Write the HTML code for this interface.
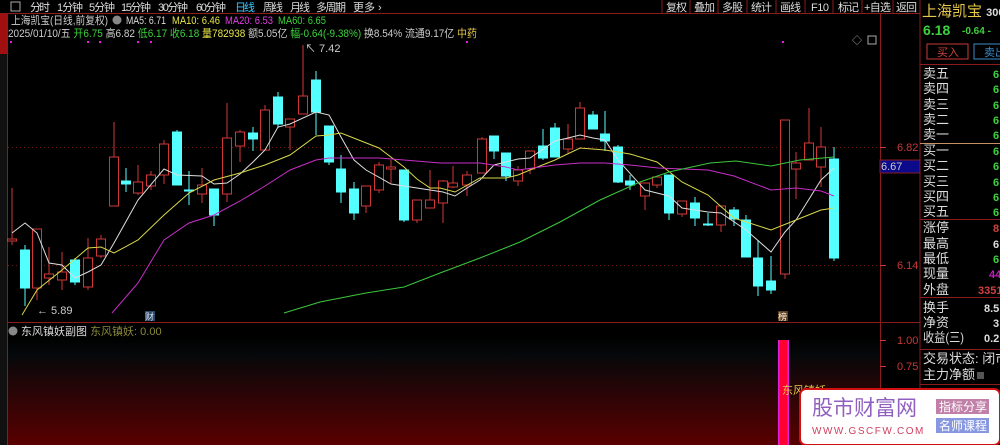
<!DOCTYPE html>
<html><head><meta charset="utf-8"><style>
body{margin:0;background:#000;width:1000px;height:445px;overflow:hidden;font-family:"Liberation Sans","Noto Sans CJK SC",sans-serif}
svg{position:absolute;left:0;top:0}
text{font-family:"Liberation Sans","Noto Sans CJK SC",sans-serif}
</style></head><body>
<svg width="1000" height="445" viewBox="0 0 1000 445">
<defs>
<linearGradient id="g" x1="0" y1="0" x2="0" y2="1"><stop offset="0" stop-color="#000"/><stop offset="0.15" stop-color="#05080a"/><stop offset="1" stop-color="#5a0000"/></linearGradient>
</defs>
<rect x="8" y="338" width="872" height="107" fill="url(#g)"/>
<!-- top bar -->
<line x1="0" y1="13.5" x2="920" y2="13.5" stroke="#8a1c1c"/>
<rect x="11" y="2" width="9" height="9" fill="none" stroke="#aaa"/>
<g font-size="11" fill="#ddd">
<text x="30" y="11" textLength="20">分时</text><text x="57" y="11" textLength="26">1分钟</text><text x="89" y="11" textLength="26">5分钟</text><text x="121" y="11" textLength="30">15分钟</text><text x="158" y="11" textLength="30">30分钟</text><text x="196" y="11" textLength="30">60分钟</text><text x="235" y="11" fill="#3cc8ff" textLength="20">日线</text><text x="263" y="11" textLength="20">周线</text><text x="290" y="11" textLength="20">月线</text><text x="316" y="11" textLength="30">多周期</text><text x="353" y="11">更多 ›</text>
<text x="666" y="11" textLength="21">复权</text><text x="694" y="11" textLength="21">叠加</text><text x="722" y="11" textLength="21">多股</text><text x="751" y="11" textLength="21">统计</text><text x="780" y="11" textLength="21">画线</text><text x="811" y="11" textLength="18">F10</text><text x="838" y="11" textLength="21">标记</text><text x="864" y="11" textLength="27">+自选</text><text x="896" y="11" textLength="21">返回</text>
</g>
<g stroke="#8a1c1c"><line x1="662" y1="0" x2="662" y2="13"/><line x1="690" y1="0" x2="690" y2="13"/><line x1="718" y1="0" x2="718" y2="13"/><line x1="747" y1="0" x2="747" y2="13"/><line x1="776" y1="0" x2="776" y2="13"/><line x1="805" y1="0" x2="805" y2="13"/><line x1="833" y1="0" x2="833" y2="13"/><line x1="862" y1="0" x2="862" y2="13"/><line x1="893" y1="0" x2="893" y2="13"/><line x1="920" y1="0" x2="920" y2="445"/></g>
<!-- left strip -->
<rect x="0" y="14" width="7" height="431" fill="#111"/>
<rect x="0" y="14" width="7" height="40" fill="#a01010"/>
<line x1="7.5" y1="14" x2="7.5" y2="445" stroke="#8a1c1c"/>
<!-- chart frame -->
<line x1="880.5" y1="14" x2="880.5" y2="445" stroke="#8a1c1c"/>
<line x1="8" y1="322.5" x2="920" y2="322.5" stroke="#8a1c1c"/>
<line x1="8" y1="147.5" x2="880" y2="147.5" stroke="#6a1a1a" stroke-dasharray="1,3"/>
<line x1="8" y1="265.5" x2="880" y2="265.5" stroke="#6a1a1a" stroke-dasharray="1,3"/>
<g font-size="11"><text x="11" y="24" fill="#ccc" textLength="97" lengthAdjust="spacingAndGlyphs">上海凯宝(日线,前复权)</text>
<circle cx="117" cy="20" r="4.5" fill="#888"/>
<text x="126" y="24" fill="#ddd" textLength="40" lengthAdjust="spacingAndGlyphs">MA5: 6.71</text><text x="172" y="24" fill="#e6e64a" textLength="48" lengthAdjust="spacingAndGlyphs">MA10: 6.46</text><text x="225" y="24" fill="#e23ce2" textLength="48" lengthAdjust="spacingAndGlyphs">MA20: 6.53</text><text x="278" y="24" fill="#3cd23c" textLength="48" lengthAdjust="spacingAndGlyphs">MA60: 6.65</text>
<text x="8" y="37" fill="#ccc" textLength="469" lengthAdjust="spacingAndGlyphs">2025/01/10/五 <tspan fill="#3cd23c">开6.75</tspan> 高6.82 <tspan fill="#3cd23c">低6.17 收6.18</tspan> <tspan fill="#e6e64a">量782938</tspan> 额5.05亿 <tspan fill="#3cd23c">幅-0.64(-9.38%)</tspan> 换8.54% 流通9.17亿 <tspan fill="#e6c84a">中药</tspan></text></g>
<g fill="#e020e0"><rect x="10" y="41" width="2" height="2"/><rect x="87" y="41" width="2" height="2"/><rect x="99" y="41" width="2" height="2"/><rect x="137" y="41" width="2" height="2"/><rect x="150" y="41" width="2" height="2"/><rect x="466" y="41" width="2" height="2"/><rect x="782" y="41" width="2" height="2"/></g>
<text x="852" y="44" font-size="10" fill="#aaa">◇</text><rect x="868" y="36" width="8" height="8" fill="none" stroke="#aaa"/>
<!-- candles -->
<g stroke="#d03838" stroke-width="1" fill="#000">
<line x1="12" y1="188" x2="12" y2="245"/><rect x="7.5" y="239" width="9" height="2"/>
<line x1="37" y1="229" x2="37" y2="300"/><rect x="32.5" y="229" width="9" height="59"/>
<line x1="49" y1="247" x2="49" y2="285"/><rect x="44.5" y="274" width="9" height="4"/>
<line x1="62" y1="252" x2="62" y2="290"/><rect x="57.5" y="272" width="9" height="8"/>
<line x1="88" y1="238" x2="88" y2="290"/><rect x="83.5" y="258" width="9" height="29"/>
<line x1="101" y1="235" x2="101" y2="258"/><rect x="96.5" y="239" width="9" height="17"/>
<line x1="114" y1="122" x2="114" y2="206"/><rect x="109.5" y="157" width="9" height="49"/>
<line x1="138" y1="165" x2="138" y2="195"/><rect x="133.5" y="182" width="9" height="11"/>
<line x1="151" y1="171" x2="151" y2="190"/><rect x="146.5" y="175" width="9" height="11"/>
<line x1="164" y1="140" x2="164" y2="184"/><rect x="159.5" y="144" width="9" height="31"/>
<line x1="202" y1="168" x2="202" y2="203"/><rect x="197.5" y="185" width="9" height="9"/>
<line x1="227" y1="103" x2="227" y2="202"/><rect x="222.5" y="138" width="9" height="56"/>
<line x1="240" y1="130" x2="240" y2="162"/><rect x="235.5" y="132" width="9" height="14"/>
<line x1="265" y1="105" x2="265" y2="150"/><rect x="260.5" y="110" width="9" height="40"/>
<line x1="290" y1="119" x2="290" y2="150"/><rect x="285.5" y="119" width="9" height="8"/>
<line x1="303" y1="45" x2="303" y2="114"/><rect x="298.5" y="96" width="9" height="18"/>
<line x1="366" y1="186" x2="366" y2="213"/><rect x="361.5" y="186" width="9" height="20"/>
<line x1="379" y1="162" x2="379" y2="193"/><rect x="374.5" y="165" width="9" height="25"/>
<line x1="391" y1="160" x2="391" y2="183"/><rect x="386.5" y="167" width="9" height="2"/>
<line x1="417" y1="200" x2="417" y2="223"/><rect x="412.5" y="200" width="9" height="20"/>
<line x1="430" y1="170" x2="430" y2="208"/><rect x="425.5" y="200" width="9" height="8"/>
<line x1="443" y1="180" x2="443" y2="223"/><rect x="438.5" y="181" width="9" height="22"/>
<line x1="453" y1="166" x2="453" y2="188"/><rect x="448.5" y="183" width="9" height="4"/>
<line x1="467" y1="171" x2="467" y2="196"/><rect x="462.5" y="175" width="9" height="10"/>
<line x1="482" y1="137" x2="482" y2="173"/><rect x="477.5" y="139" width="9" height="34"/>
<line x1="518" y1="166" x2="518" y2="186"/><rect x="513.5" y="170" width="9" height="11"/>
<line x1="530" y1="151" x2="530" y2="174"/><rect x="525.5" y="151" width="9" height="18"/>
<line x1="568" y1="124" x2="568" y2="154"/><rect x="563.5" y="139" width="9" height="10"/>
<line x1="580" y1="102" x2="580" y2="139"/><rect x="575.5" y="108" width="9" height="31"/>
<line x1="645" y1="183" x2="645" y2="210"/><rect x="640.5" y="183" width="9" height="13"/>
<line x1="657" y1="177" x2="657" y2="188"/><rect x="652.5" y="177" width="9" height="8"/>
<line x1="682" y1="201" x2="682" y2="217"/><rect x="677.5" y="201" width="9" height="13"/>
<line x1="721" y1="206" x2="721" y2="232"/><rect x="716.5" y="206" width="9" height="19"/>
<line x1="785" y1="120" x2="785" y2="279"/><rect x="780.5" y="120" width="9" height="154"/>
<line x1="796" y1="152" x2="796" y2="199"/><rect x="791.5" y="163" width="9" height="6"/>
<line x1="809" y1="108" x2="809" y2="160"/><rect x="804.5" y="143" width="9" height="17"/>
<line x1="821" y1="127" x2="821" y2="187"/><rect x="816.5" y="147" width="9" height="20"/>
</g>
<g stroke="#54ffff" fill="#54ffff">
<line x1="25" y1="245" x2="25" y2="306"/><rect x="20.5" y="250" width="9" height="38"/>
<line x1="75" y1="258" x2="75" y2="285"/><rect x="70.5" y="260" width="9" height="22"/>
<line x1="126" y1="168" x2="126" y2="192"/><rect x="121.5" y="181" width="9" height="3"/>
<line x1="177" y1="130" x2="177" y2="185"/><rect x="172.5" y="132" width="9" height="53"/>
<line x1="189" y1="171" x2="189" y2="205"/><rect x="184.5" y="190" width="9" height="1"/>
<line x1="214" y1="189" x2="214" y2="226"/><rect x="209.5" y="189" width="9" height="26"/>
<line x1="253" y1="127" x2="253" y2="151"/><rect x="248.5" y="133" width="9" height="6"/>
<line x1="278" y1="92" x2="278" y2="128"/><rect x="273.5" y="97" width="9" height="27"/>
<line x1="316" y1="71" x2="316" y2="135"/><rect x="311.5" y="80" width="9" height="32"/>
<line x1="329" y1="126" x2="329" y2="165"/><rect x="324.5" y="126" width="9" height="36"/>
<line x1="341" y1="155" x2="341" y2="203"/><rect x="336.5" y="169" width="9" height="23"/>
<line x1="354" y1="182" x2="354" y2="220"/><rect x="349.5" y="189" width="9" height="24"/>
<line x1="404" y1="170" x2="404" y2="222"/><rect x="399.5" y="170" width="9" height="50"/>
<line x1="494" y1="136" x2="494" y2="159"/><rect x="489.5" y="136" width="9" height="15"/>
<line x1="506" y1="153" x2="506" y2="181"/><rect x="501.5" y="153" width="9" height="23"/>
<line x1="543" y1="129" x2="543" y2="160"/><rect x="538.5" y="146" width="9" height="12"/>
<line x1="555" y1="123" x2="555" y2="157"/><rect x="550.5" y="128" width="9" height="29"/>
<line x1="593" y1="111" x2="593" y2="129"/><rect x="588.5" y="115" width="9" height="14"/>
<line x1="605" y1="111" x2="605" y2="151"/><rect x="600.5" y="134" width="9" height="7"/>
<line x1="618" y1="145" x2="618" y2="183"/><rect x="613.5" y="147" width="9" height="35"/>
<line x1="630" y1="175" x2="630" y2="190"/><rect x="625.5" y="181" width="9" height="4"/>
<line x1="669" y1="175" x2="669" y2="220"/><rect x="664.5" y="175" width="9" height="38"/>
<line x1="695" y1="197" x2="695" y2="226"/><rect x="690.5" y="203" width="9" height="15"/>
<line x1="708" y1="213" x2="708" y2="226"/><rect x="703.5" y="224" width="9" height="1"/>
<line x1="734" y1="207" x2="734" y2="226"/><rect x="729.5" y="210" width="9" height="9"/>
<line x1="746" y1="215" x2="746" y2="257"/><rect x="741.5" y="220" width="9" height="37"/>
<line x1="758" y1="240" x2="758" y2="296"/><rect x="753.5" y="258" width="9" height="28"/>
<line x1="771" y1="256" x2="771" y2="294"/><rect x="766.5" y="281" width="9" height="9"/>
<line x1="834" y1="147" x2="834" y2="261"/><rect x="829.5" y="159" width="9" height="99"/>
</g>
<!-- MAs -->
<g fill="none" stroke-width="1">
<polyline stroke="#dddddd" points="12,233 25,223 37,233 49,263 62,265 75,278 88,272 101,265 114,243 138,200 164,169 177,175 202,176 214,184 227,183 240,174 253,162 265,150 278,127 290,124 316,112 329,115 341,137 354,160 366,170 391,184 430,190 443,192 455,196 467,188 480,180 494,165 506,162 518,159 530,158 555,141 568,138 580,135 593,138 605,140 618,160 645,190 669,196 682,208 708,212 721,213 746,230 771,252 785,232 796,220 821,180 834,168"/>
<polyline stroke="#d8d84a" points="22,315 37,290 62,270 88,248 101,247 114,253 138,240 164,215 189,193 214,180 240,173 265,165 290,155 316,136 329,135 341,133 379,148 404,167 417,179 430,188 440,188 455,192 480,178 506,178 518,175 530,170 555,160 580,148 605,150 630,154 657,162 682,182 708,195 734,218 771,230 796,220 821,210 834,208"/>
<polyline stroke="#c82ec8" points="112,313 138,283 164,240 189,223 214,215 240,201 265,186 290,170 316,160 329,158 354,158 379,158 404,160 440,163 480,163 506,167 518,170 555,165 580,163 605,163 630,165 658,168 708,170 734,176 771,190 796,188 821,191 834,196"/>
<polyline stroke="#3cc83c" points="284,313 320,302 366,293 404,287 440,273 480,258 520,242 560,222 600,200 640,182 669,172 710,163 736,161 771,166 800,160 834,157"/>
</g>
<text x="305" y="52" font-size="11" fill="#ccc">↖ 7.42</text>
<text x="37" y="314" font-size="11" fill="#ccc">← 5.89</text>
<rect x="145" y="311" width="10" height="10" fill="#2a4a6a"/><text x="145" y="320" font-size="9" fill="#dde">财</text>
<rect x="778" y="311" width="10" height="10" fill="#5a4020"/><text x="778" y="320" font-size="9" fill="#fed">榜</text>
<!-- right axis -->
<g font-size="11" fill="#c83838"><text x="897" y="151">6.82</text><text x="897" y="269">6.14</text><text x="897" y="344">1.00</text><text x="897" y="370">0.75</text></g>
<g stroke="#c83838"><line x1="880" y1="147.5" x2="886" y2="147.5"/><line x1="880" y1="265.5" x2="886" y2="265.5"/><line x1="880" y1="340.5" x2="886" y2="340.5"/><line x1="880" y1="366.5" x2="886" y2="366.5"/></g>
<rect x="880" y="160" width="40" height="13" fill="#0a0a8a" stroke="#8a1c1c"/><text x="881" y="170" font-size="11" fill="#ccc">6.67</text>
<!-- sub chart -->
<circle cx="13" cy="331" r="4.5" fill="#888"/>
<text x="21" y="335" font-size="11" fill="#ddd">东风镇妖副图 <tspan fill="#8a8a3a">东风镇妖: 0.00</tspan></text>
<rect x="778" y="340" width="11" height="105" fill="#ff0030"/><rect x="778" y="340" width="1.5" height="105" fill="#e020e0"/><rect x="787.5" y="340" width="1.5" height="105" fill="#e020e0"/>
<text x="782" y="394" font-size="11" fill="#e6c84a">东风镇妖</text>
<!-- right panel -->
<text x="922" y="16" font-size="15" fill="#e6c84a">上海凯宝 <tspan font-size="11" fill="#ddd" font-weight="bold">300</tspan></text>
<text x="923" y="35" font-size="14" font-weight="bold" fill="#3cd23c">6.18</text><text x="962" y="34" font-size="10" font-weight="bold" fill="#3cd23c">-0.64 -</text>
<rect x="927" y="44" width="41" height="15" fill="none" stroke="#c83838"/><text x="937" y="56" font-size="11" fill="#d04040">买入</text>
<rect x="974" y="44" width="30" height="15" fill="none" stroke="#3c8ac8"/><text x="984" y="56" font-size="11" fill="#3c8ac8">卖出</text>
<line x1="920" y1="64.5" x2="1000" y2="64.5" stroke="#8a1c1c"/>
<g font-size="13" fill="#ddd">
<text x="923" y="78">卖五</text><text x="923" y="93">卖四</text><text x="923" y="109">卖三</text><text x="923" y="124">卖二</text><text x="923" y="139">卖一</text>
<text x="923" y="155">买一</text><text x="923" y="170">买二</text><text x="923" y="186">买三</text><text x="923" y="201">买四</text><text x="923" y="216">买五</text>
<text x="923" y="232">涨停</text><text x="923" y="248">最高</text><text x="923" y="263">最低</text><text x="923" y="278">现量</text><text x="923" y="294">外盘</text>
<text x="923" y="312">换手</text><text x="923" y="327">净资</text><text x="923" y="342" textLength="41" lengthAdjust="spacingAndGlyphs">收益(三)</text>
<text x="923" y="363">交易状态: 闭市</text><text x="923" y="379">主力净额</text>
</g>
<g font-size="11" font-weight="bold" fill="#3cd23c">
<text x="993" y="78">6</text><text x="993" y="93">6</text><text x="993" y="109">6</text><text x="993" y="124">6</text><text x="993" y="139">6</text>
<text x="993" y="155">6</text><text x="993" y="170">6</text><text x="993" y="186">6</text><text x="993" y="201">6</text><text x="993" y="216">6</text>
<text x="993" y="232" fill="#d04040">8</text><text x="993" y="248" fill="#ddd">6</text><text x="993" y="263">6</text><text x="989" y="278" fill="#c020c0">44</text><text x="978" y="294" fill="#d04040">3351</text>
<text x="984" y="312" fill="#ddd">8.5</text><text x="993" y="327" fill="#ddd">3</text><text x="984" y="342" fill="#ddd">0.2</text>
</g>
<g stroke="#8a1c1c"><line x1="920" y1="143.5" x2="1000" y2="143.5" stroke="#c89060"/><line x1="920" y1="219.5" x2="1000" y2="219.5"/><line x1="920" y1="297.5" x2="1000" y2="297.5"/><line x1="920" y1="349.5" x2="1000" y2="349.5"/><line x1="920" y1="384.5" x2="1000" y2="384.5"/></g>
<rect x="977" y="372" width="7" height="7" fill="#555"/>
<!-- watermark -->
<rect x="800" y="389" width="200" height="56" rx="6" fill="#fff" stroke="#d01010" stroke-width="2"/>
<text x="812" y="415" font-size="21" fill="#9060c0" font-family="Liberation Serif,Noto Serif CJK SC,serif">股市财富网</text>
<text x="812" y="434" font-size="10" fill="#d04060" font-family="Liberation Serif,serif" letter-spacing="1.5">WWW.GSCFW.COM</text>
<rect x="936" y="399" width="53" height="15" fill="#c080a8"/><text x="939" y="411" font-size="12" fill="#fff">指标分享</text>
<rect x="936" y="418" width="53" height="15" fill="#8898e0"/><text x="939" y="430" font-size="12" fill="#fff">名师课程</text>
</svg>
</body></html>
